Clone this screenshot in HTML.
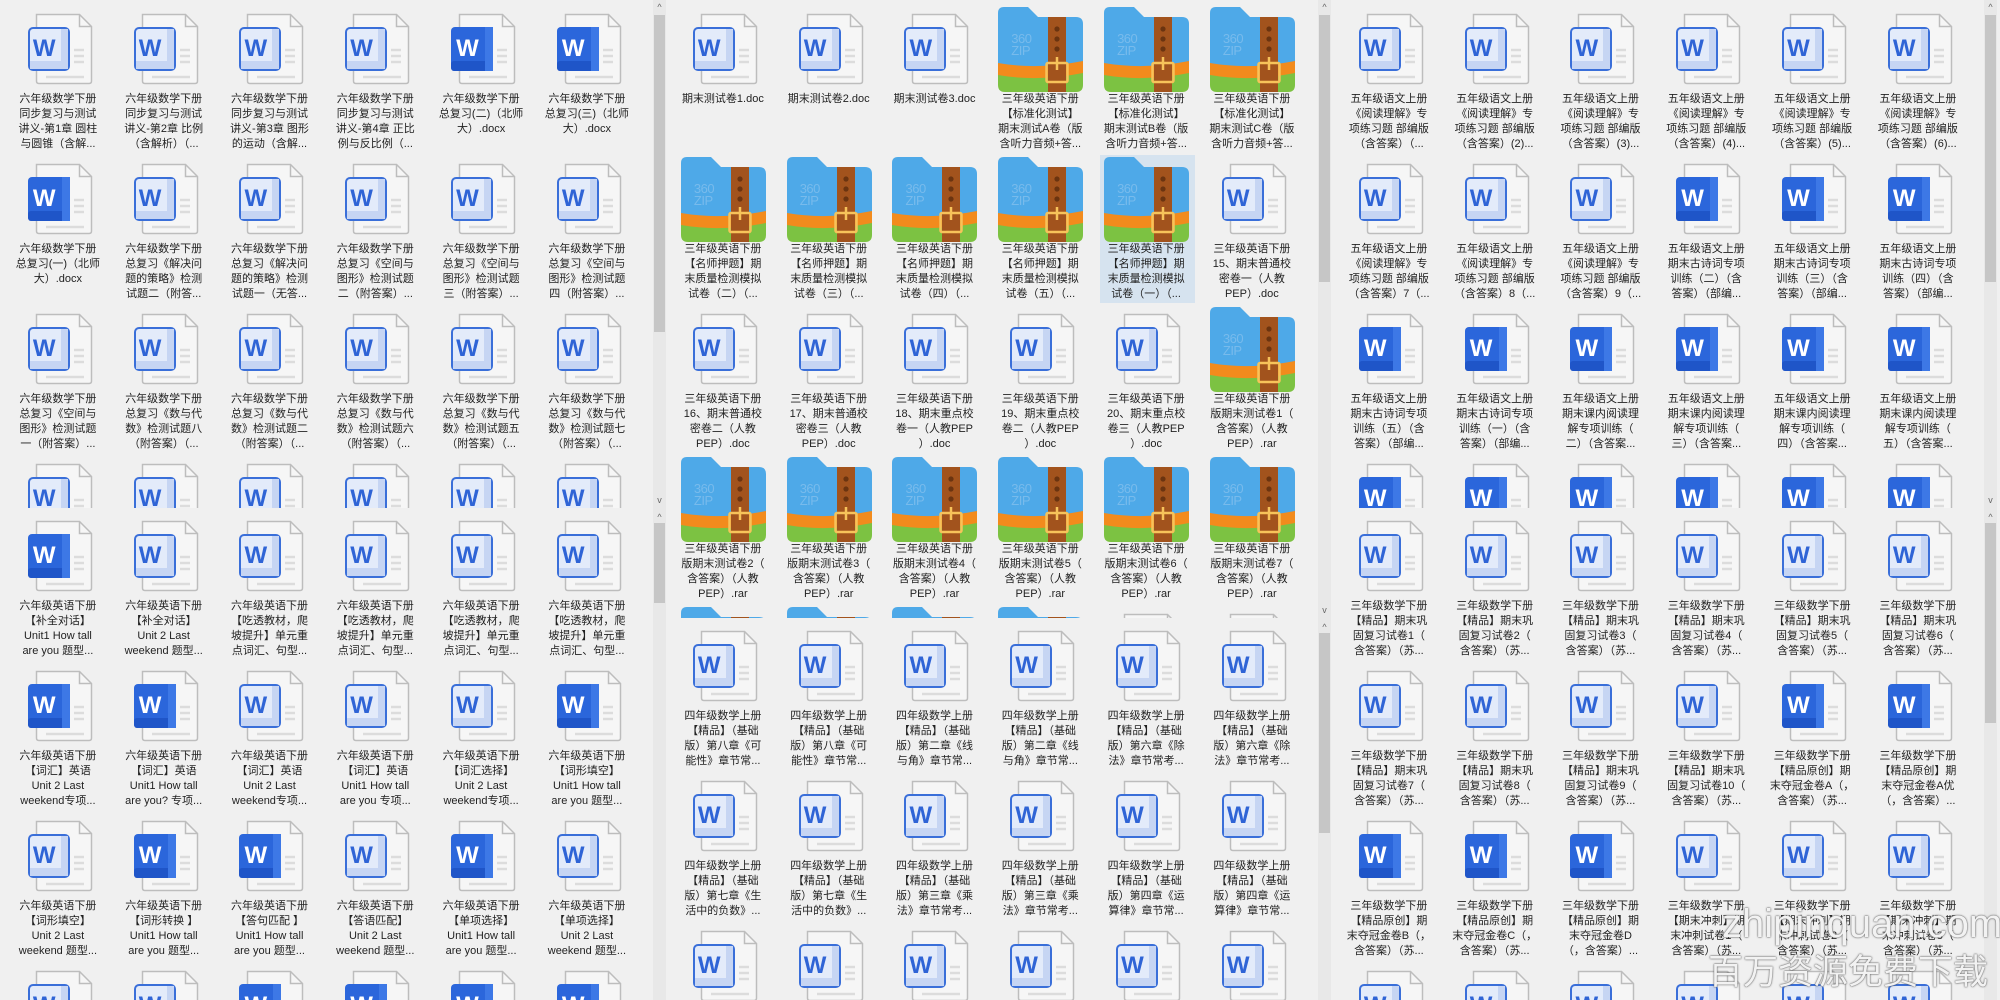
<!DOCTYPE html>
<html><head><meta charset="utf-8"><style>
html,body{margin:0;padding:0}
body{width:2000px;height:1000px;background:#f0f0f0;position:relative;overflow:hidden;font-family:"Liberation Sans","Noto Sans CJK SC",sans-serif}
.seg{position:absolute;overflow:hidden}
.g{position:absolute;left:0;display:grid;grid-template-columns:repeat(6,105.8px);grid-auto-rows:150px}
.it{position:relative}
.it svg{position:absolute}
.ic{left:calc(50% - 30px);top:0;width:66px;height:72px}
.zp{left:calc(50% - 42px);top:-6px;width:85px;height:85px}
.w{position:absolute;left:calc(50% - 25px);top:22px;font:bold 24px "Liberation Sans",sans-serif;color:#2f64d6}
.dk .w{color:#fff}
.zt{position:absolute;left:calc(50% - 29px);top:20px;font:13px/12px "Liberation Sans",sans-serif;color:#78bbec;letter-spacing:-0.5px}
.it p{position:absolute;top:79px;left:-6px;right:-6px;margin:0;text-align:center;font-size:11px;line-height:15px;color:#222;white-space:nowrap}
.sel{position:absolute;left:calc(50% - 46px);top:-8px;width:95px;height:148px;background:#d6e3ef}
.tr{position:absolute;width:13px;background:#e8e8e8}
.th{position:absolute;width:11px;background:#c6c6c6}
.ar{position:absolute;width:13px;font:9px/10px "Liberation Sans",sans-serif;color:#666;text-align:center}
.wm{position:absolute;color:rgba(255,255,255,0.92);text-shadow:0 0 2px #666,0 0 1px #444;white-space:nowrap}
</style></head><body>
<svg width="0" height="0" style="position:absolute">
<defs>
<symbol id="L" viewBox="0 0 66 72">
<path d="M8.5 1.5H51.5L63.5 13.5V68Q63.5 70.5 61 70.5H11Q8.5 70.5 8.5 68Z" fill="#f6f6f6" stroke="#bdbdbd" stroke-width="1.5"/>
<path d="M51.5 1.5V13.5H63.5" fill="none" stroke="#bdbdbd" stroke-width="1.5"/>
<path d="M46 37h10M46 43h10M46 49h10M18 64h38" stroke="#dcdcdc" stroke-width="2.5"/>
<rect x="1" y="15" width="40" height="42" rx="4" fill="#e3ebfa" stroke="#3a6fd9" stroke-width="2"/>
<rect x="33" y="16" width="7" height="40" fill="#c6d5f3"/>
<rect x="2" y="48" width="38" height="8" fill="#c6d5f3"/>
</symbol>
<symbol id="D" viewBox="0 0 66 72">
<path d="M8.5 1.5H51.5L63.5 13.5V68Q63.5 70.5 61 70.5H11Q8.5 70.5 8.5 68Z" fill="#f6f6f6" stroke="#bdbdbd" stroke-width="1.5"/>
<path d="M51.5 1.5V13.5H63.5" fill="none" stroke="#bdbdbd" stroke-width="1.5"/>
<path d="M46 37h10M46 43h10M46 49h10M18 64h38" stroke="#dcdcdc" stroke-width="2.5"/>
<rect x="0" y="14" width="42" height="44" rx="4" fill="#2b66db"/>
<rect x="0" y="48" width="42" height="10" rx="3" fill="#1f55c8"/>
<rect x="34" y="14" width="8" height="44" fill="#3d78e6"/>
</symbol>
<symbol id="Z" viewBox="0 0 85 85">
<path d="M6 0H30L40 10H78Q85 10 85 17V62H0V6Q0 0 6 0Z" fill="#4ea9e8"/>
<path d="M0 56Q40 63 85 54V72H0Z" fill="#f28b1d"/>
<path d="M0 68Q40 75 85 66V78Q85 85 78 85H7Q0 85 0 78Z" fill="#7cc242"/>
<rect x="50" y="10" width="18" height="75" fill="#a2531d"/>
<circle cx="59" cy="22" r="2.6" fill="#6b3410"/><circle cx="59" cy="32" r="2.6" fill="#6b3410"/><circle cx="59" cy="42" r="2.6" fill="#6b3410"/>
<rect x="48.5" y="56" width="21" height="19" rx="1.5" fill="none" stroke="#f7c35a" stroke-width="2.5"/>
<path d="M59 50V63" stroke="#f7c35a" stroke-width="2.5"/>
</symbol>
</defs></svg>

<!-- PANEL 1 -->
<div class="seg" style="left:5px;top:0;width:640px;height:508px">
<div class="g" style="top:13px">
<div class="it"><svg class="ic"><use href="#L"/></svg><b class="w">W</b><p>六年级数学下册<br>同步复习与测试<br>讲义-第1章 圆柱<br>与圆锥（含解...</p></div>
<div class="it"><svg class="ic"><use href="#L"/></svg><b class="w">W</b><p>六年级数学下册<br>同步复习与测试<br>讲义-第2章 比例<br>（含解析）（...</p></div>
<div class="it"><svg class="ic"><use href="#L"/></svg><b class="w">W</b><p>六年级数学下册<br>同步复习与测试<br>讲义-第3章 图形<br>的运动（含解...</p></div>
<div class="it"><svg class="ic"><use href="#L"/></svg><b class="w">W</b><p>六年级数学下册<br>同步复习与测试<br>讲义-第4章 正比<br>例与反比例（...</p></div>
<div class="it dk"><svg class="ic"><use href="#D"/></svg><b class="w">W</b><p>六年级数学下册<br>总复习(二)（北师<br>大）.docx</p></div>
<div class="it dk"><svg class="ic"><use href="#D"/></svg><b class="w">W</b><p>六年级数学下册<br>总复习(三)（北师<br>大）.docx</p></div>
<div class="it dk"><svg class="ic"><use href="#D"/></svg><b class="w">W</b><p>六年级数学下册<br>总复习(一)（北师<br>大）.docx</p></div>
<div class="it"><svg class="ic"><use href="#L"/></svg><b class="w">W</b><p>六年级数学下册<br>总复习《解决问<br>题的策略》检测<br>试题二（附答...</p></div>
<div class="it"><svg class="ic"><use href="#L"/></svg><b class="w">W</b><p>六年级数学下册<br>总复习《解决问<br>题的策略》检测<br>试题一（无答...</p></div>
<div class="it"><svg class="ic"><use href="#L"/></svg><b class="w">W</b><p>六年级数学下册<br>总复习《空间与<br>图形》检测试题<br>二（附答案）...</p></div>
<div class="it"><svg class="ic"><use href="#L"/></svg><b class="w">W</b><p>六年级数学下册<br>总复习《空间与<br>图形》检测试题<br>三（附答案）...</p></div>
<div class="it"><svg class="ic"><use href="#L"/></svg><b class="w">W</b><p>六年级数学下册<br>总复习《空间与<br>图形》检测试题<br>四（附答案）...</p></div>
<div class="it"><svg class="ic"><use href="#L"/></svg><b class="w">W</b><p>六年级数学下册<br>总复习《空间与<br>图形》检测试题<br>一（附答案）...</p></div>
<div class="it"><svg class="ic"><use href="#L"/></svg><b class="w">W</b><p>六年级数学下册<br>总复习《数与代<br>数》检测试题八<br>（附答案）（...</p></div>
<div class="it"><svg class="ic"><use href="#L"/></svg><b class="w">W</b><p>六年级数学下册<br>总复习《数与代<br>数》检测试题二<br>（附答案）（...</p></div>
<div class="it"><svg class="ic"><use href="#L"/></svg><b class="w">W</b><p>六年级数学下册<br>总复习《数与代<br>数》检测试题六<br>（附答案）（...</p></div>
<div class="it"><svg class="ic"><use href="#L"/></svg><b class="w">W</b><p>六年级数学下册<br>总复习《数与代<br>数》检测试题五<br>（附答案）（...</p></div>
<div class="it"><svg class="ic"><use href="#L"/></svg><b class="w">W</b><p>六年级数学下册<br>总复习《数与代<br>数》检测试题七<br>（附答案）（...</p></div>
<div class="it"><svg class="ic"><use href="#L"/></svg><b class="w">W</b></div>
<div class="it"><svg class="ic"><use href="#L"/></svg><b class="w">W</b></div>
<div class="it"><svg class="ic"><use href="#L"/></svg><b class="w">W</b></div>
<div class="it"><svg class="ic"><use href="#L"/></svg><b class="w">W</b></div>
<div class="it"><svg class="ic"><use href="#L"/></svg><b class="w">W</b></div>
<div class="it"><svg class="ic"><use href="#L"/></svg><b class="w">W</b></div>
</div></div>

<div class="seg" style="left:5px;top:508px;width:640px;height:492px">
<div class="g" style="top:12px">
<div class="it dk"><svg class="ic"><use href="#D"/></svg><b class="w">W</b><p>六年级英语下册<br>【补全对话】<br>Unit1 How tall<br>are you 题型...</p></div>
<div class="it"><svg class="ic"><use href="#L"/></svg><b class="w">W</b><p>六年级英语下册<br>【补全对话】<br>Unit 2 Last<br>weekend 题型...</p></div>
<div class="it"><svg class="ic"><use href="#L"/></svg><b class="w">W</b><p>六年级英语下册<br>【吃透教材，爬<br>坡提升】单元重<br>点词汇、句型...</p></div>
<div class="it"><svg class="ic"><use href="#L"/></svg><b class="w">W</b><p>六年级英语下册<br>【吃透教材，爬<br>坡提升】单元重<br>点词汇、句型...</p></div>
<div class="it"><svg class="ic"><use href="#L"/></svg><b class="w">W</b><p>六年级英语下册<br>【吃透教材，爬<br>坡提升】单元重<br>点词汇、句型...</p></div>
<div class="it"><svg class="ic"><use href="#L"/></svg><b class="w">W</b><p>六年级英语下册<br>【吃透教材，爬<br>坡提升】单元重<br>点词汇、句型...</p></div>
<div class="it dk"><svg class="ic"><use href="#D"/></svg><b class="w">W</b><p>六年级英语下册<br>【词汇】英语<br>Unit 2 Last<br>weekend专项...</p></div>
<div class="it dk"><svg class="ic"><use href="#D"/></svg><b class="w">W</b><p>六年级英语下册<br>【词汇】英语<br>Unit1 How tall<br>are you? 专项...</p></div>
<div class="it"><svg class="ic"><use href="#L"/></svg><b class="w">W</b><p>六年级英语下册<br>【词汇】英语<br>Unit 2 Last<br>weekend专项...</p></div>
<div class="it"><svg class="ic"><use href="#L"/></svg><b class="w">W</b><p>六年级英语下册<br>【词汇】英语<br>Unit1 How tall<br>are you 专项...</p></div>
<div class="it"><svg class="ic"><use href="#L"/></svg><b class="w">W</b><p>六年级英语下册<br>【词汇选择】<br>Unit 2 Last<br>weekend专项...</p></div>
<div class="it dk"><svg class="ic"><use href="#D"/></svg><b class="w">W</b><p>六年级英语下册<br>【词形填空】<br>Unit1 How tall<br>are you 题型...</p></div>
<div class="it"><svg class="ic"><use href="#L"/></svg><b class="w">W</b><p>六年级英语下册<br>【词形填空】<br>Unit 2 Last<br>weekend 题型...</p></div>
<div class="it dk"><svg class="ic"><use href="#D"/></svg><b class="w">W</b><p>六年级英语下册<br>【词形转换 】<br>Unit1 How tall<br>are you 题型...</p></div>
<div class="it dk"><svg class="ic"><use href="#D"/></svg><b class="w">W</b><p>六年级英语下册<br>【答句匹配 】<br>Unit1 How tall<br>are you 题型...</p></div>
<div class="it"><svg class="ic"><use href="#L"/></svg><b class="w">W</b><p>六年级英语下册<br>【答语匹配】<br>Unit 2 Last<br>weekend 题型...</p></div>
<div class="it dk"><svg class="ic"><use href="#D"/></svg><b class="w">W</b><p>六年级英语下册<br>【单项选择】<br>Unit1 How tall<br>are you 题型...</p></div>
<div class="it"><svg class="ic"><use href="#L"/></svg><b class="w">W</b><p>六年级英语下册<br>【单项选择】<br>Unit 2 Last<br>weekend 题型...</p></div>
<div class="it"><svg class="ic"><use href="#L"/></svg><b class="w">W</b></div>
<div class="it"><svg class="ic"><use href="#L"/></svg><b class="w">W</b></div>
<div class="it dk"><svg class="ic"><use href="#D"/></svg><b class="w">W</b></div>
<div class="it dk"><svg class="ic"><use href="#D"/></svg><b class="w">W</b></div>
<div class="it dk"><svg class="ic"><use href="#D"/></svg><b class="w">W</b></div>
<div class="it dk"><svg class="ic"><use href="#D"/></svg><b class="w">W</b></div>
</div></div>

<!-- PANEL 2 -->
<div class="seg" style="left:670px;top:0;width:645px;height:618px">
<div class="g" style="top:13px">
<div class="it"><svg class="ic"><use href="#L"/></svg><b class="w">W</b><p>期末测试卷1.doc</p></div>
<div class="it"><svg class="ic"><use href="#L"/></svg><b class="w">W</b><p>期末测试卷2.doc</p></div>
<div class="it"><svg class="ic"><use href="#L"/></svg><b class="w">W</b><p>期末测试卷3.doc</p></div>
<div class="it"><svg class="zp"><use href="#Z"/></svg><span class="zt">360<br>ZIP</span><p>三年级英语下册<br>【标准化测试】<br>期末测试A卷（版<br>含听力音频+答...</p></div>
<div class="it"><svg class="zp"><use href="#Z"/></svg><span class="zt">360<br>ZIP</span><p>三年级英语下册<br>【标准化测试】<br>期末测试B卷（版<br>含听力音频+答...</p></div>
<div class="it"><svg class="zp"><use href="#Z"/></svg><span class="zt">360<br>ZIP</span><p>三年级英语下册<br>【标准化测试】<br>期末测试C卷（版<br>含听力音频+答...</p></div>
<div class="it"><svg class="zp"><use href="#Z"/></svg><span class="zt">360<br>ZIP</span><p>三年级英语下册<br>【名师押题】期<br>末质量检测模拟<br>试卷（二）（...</p></div>
<div class="it"><svg class="zp"><use href="#Z"/></svg><span class="zt">360<br>ZIP</span><p>三年级英语下册<br>【名师押题】期<br>末质量检测模拟<br>试卷（三）（...</p></div>
<div class="it"><svg class="zp"><use href="#Z"/></svg><span class="zt">360<br>ZIP</span><p>三年级英语下册<br>【名师押题】期<br>末质量检测模拟<br>试卷（四）（...</p></div>
<div class="it"><svg class="zp"><use href="#Z"/></svg><span class="zt">360<br>ZIP</span><p>三年级英语下册<br>【名师押题】期<br>末质量检测模拟<br>试卷（五）（...</p></div>
<div class="it"><div class="sel"></div><svg class="zp"><use href="#Z"/></svg><span class="zt">360<br>ZIP</span><p>三年级英语下册<br>【名师押题】期<br>末质量检测模拟<br>试卷（一）（...</p></div>
<div class="it"><svg class="ic"><use href="#L"/></svg><b class="w">W</b><p>三年级英语下册<br>15、期末普通校<br>密卷一（人教<br>PEP）.doc</p></div>
<div class="it"><svg class="ic"><use href="#L"/></svg><b class="w">W</b><p>三年级英语下册<br>16、期末普通校<br>密卷二（人教<br>PEP）.doc</p></div>
<div class="it"><svg class="ic"><use href="#L"/></svg><b class="w">W</b><p>三年级英语下册<br>17、期末普通校<br>密卷三（人教<br>PEP）.doc</p></div>
<div class="it"><svg class="ic"><use href="#L"/></svg><b class="w">W</b><p>三年级英语下册<br>18、期末重点校<br>卷一（人教PEP<br>）.doc</p></div>
<div class="it"><svg class="ic"><use href="#L"/></svg><b class="w">W</b><p>三年级英语下册<br>19、期末重点校<br>卷二（人教PEP<br>）.doc</p></div>
<div class="it"><svg class="ic"><use href="#L"/></svg><b class="w">W</b><p>三年级英语下册<br>20、期末重点校<br>卷三（人教PEP<br>）.doc</p></div>
<div class="it"><svg class="zp"><use href="#Z"/></svg><span class="zt">360<br>ZIP</span><p>三年级英语下册<br>版期末测试卷1（<br>含答案）（人教<br>PEP）.rar</p></div>
<div class="it"><svg class="zp"><use href="#Z"/></svg><span class="zt">360<br>ZIP</span><p>三年级英语下册<br>版期末测试卷2（<br>含答案）（人教<br>PEP）.rar</p></div>
<div class="it"><svg class="zp"><use href="#Z"/></svg><span class="zt">360<br>ZIP</span><p>三年级英语下册<br>版期末测试卷3（<br>含答案）（人教<br>PEP）.rar</p></div>
<div class="it"><svg class="zp"><use href="#Z"/></svg><span class="zt">360<br>ZIP</span><p>三年级英语下册<br>版期末测试卷4（<br>含答案）（人教<br>PEP）.rar</p></div>
<div class="it"><svg class="zp"><use href="#Z"/></svg><span class="zt">360<br>ZIP</span><p>三年级英语下册<br>版期末测试卷5（<br>含答案）（人教<br>PEP）.rar</p></div>
<div class="it"><svg class="zp"><use href="#Z"/></svg><span class="zt">360<br>ZIP</span><p>三年级英语下册<br>版期末测试卷6（<br>含答案）（人教<br>PEP）.rar</p></div>
<div class="it"><svg class="zp"><use href="#Z"/></svg><span class="zt">360<br>ZIP</span><p>三年级英语下册<br>版期末测试卷7（<br>含答案）（人教<br>PEP）.rar</p></div>
<div class="it"><svg class="zp"><use href="#Z"/></svg></div>
<div class="it"><svg class="zp"><use href="#Z"/></svg></div>
<div class="it"><svg class="zp"><use href="#Z"/></svg></div>
<div class="it"><svg class="zp"><use href="#Z"/></svg></div>
<div class="it"><svg class="ic"><use href="#L"/></svg></div>
<div class="it"><svg class="ic"><use href="#L"/></svg></div>
</div></div>

<div class="seg" style="left:670px;top:618px;width:645px;height:382px">
<div class="g" style="top:12px">
<div class="it"><svg class="ic"><use href="#L"/></svg><b class="w">W</b><p>四年级数学上册<br>【精品】（基础<br>版）第八章《可<br>能性》章节常...</p></div>
<div class="it"><svg class="ic"><use href="#L"/></svg><b class="w">W</b><p>四年级数学上册<br>【精品】（基础<br>版）第八章《可<br>能性》章节常...</p></div>
<div class="it"><svg class="ic"><use href="#L"/></svg><b class="w">W</b><p>四年级数学上册<br>【精品】（基础<br>版）第二章《线<br>与角》章节常...</p></div>
<div class="it"><svg class="ic"><use href="#L"/></svg><b class="w">W</b><p>四年级数学上册<br>【精品】（基础<br>版）第二章《线<br>与角》章节常...</p></div>
<div class="it"><svg class="ic"><use href="#L"/></svg><b class="w">W</b><p>四年级数学上册<br>【精品】（基础<br>版）第六章《除<br>法》章节常考...</p></div>
<div class="it"><svg class="ic"><use href="#L"/></svg><b class="w">W</b><p>四年级数学上册<br>【精品】（基础<br>版）第六章《除<br>法》章节常考...</p></div>
<div class="it"><svg class="ic"><use href="#L"/></svg><b class="w">W</b><p>四年级数学上册<br>【精品】（基础<br>版）第七章《生<br>活中的负数》...</p></div>
<div class="it"><svg class="ic"><use href="#L"/></svg><b class="w">W</b><p>四年级数学上册<br>【精品】（基础<br>版）第七章《生<br>活中的负数》...</p></div>
<div class="it"><svg class="ic"><use href="#L"/></svg><b class="w">W</b><p>四年级数学上册<br>【精品】（基础<br>版）第三章《乘<br>法》章节常考...</p></div>
<div class="it"><svg class="ic"><use href="#L"/></svg><b class="w">W</b><p>四年级数学上册<br>【精品】（基础<br>版）第三章《乘<br>法》章节常考...</p></div>
<div class="it"><svg class="ic"><use href="#L"/></svg><b class="w">W</b><p>四年级数学上册<br>【精品】（基础<br>版）第四章《运<br>算律》章节常...</p></div>
<div class="it"><svg class="ic"><use href="#L"/></svg><b class="w">W</b><p>四年级数学上册<br>【精品】（基础<br>版）第四章《运<br>算律》章节常...</p></div>
<div class="it"><svg class="ic"><use href="#L"/></svg><b class="w">W</b></div>
<div class="it"><svg class="ic"><use href="#L"/></svg><b class="w">W</b></div>
<div class="it"><svg class="ic"><use href="#L"/></svg><b class="w">W</b></div>
<div class="it"><svg class="ic"><use href="#L"/></svg><b class="w">W</b></div>
<div class="it"><svg class="ic"><use href="#L"/></svg><b class="w">W</b></div>
<div class="it"><svg class="ic"><use href="#L"/></svg><b class="w">W</b></div>
</div></div>

<!-- PANEL 3 -->
<div class="seg" style="left:1336px;top:0;width:645px;height:508px">
<div class="g" style="top:13px">
<div class="it"><svg class="ic"><use href="#L"/></svg><b class="w">W</b><p>五年级语文上册<br>《阅读理解》专<br>项练习题 部编版<br>（含答案）（...</p></div>
<div class="it"><svg class="ic"><use href="#L"/></svg><b class="w">W</b><p>五年级语文上册<br>《阅读理解》专<br>项练习题 部编版<br>（含答案）(2)...</p></div>
<div class="it"><svg class="ic"><use href="#L"/></svg><b class="w">W</b><p>五年级语文上册<br>《阅读理解》专<br>项练习题 部编版<br>（含答案）(3)...</p></div>
<div class="it"><svg class="ic"><use href="#L"/></svg><b class="w">W</b><p>五年级语文上册<br>《阅读理解》专<br>项练习题 部编版<br>（含答案）(4)...</p></div>
<div class="it"><svg class="ic"><use href="#L"/></svg><b class="w">W</b><p>五年级语文上册<br>《阅读理解》专<br>项练习题 部编版<br>（含答案）(5)...</p></div>
<div class="it"><svg class="ic"><use href="#L"/></svg><b class="w">W</b><p>五年级语文上册<br>《阅读理解》专<br>项练习题 部编版<br>（含答案）(6)...</p></div>
<div class="it"><svg class="ic"><use href="#L"/></svg><b class="w">W</b><p>五年级语文上册<br>《阅读理解》专<br>项练习题 部编版<br>（含答案）7（...</p></div>
<div class="it"><svg class="ic"><use href="#L"/></svg><b class="w">W</b><p>五年级语文上册<br>《阅读理解》专<br>项练习题 部编版<br>（含答案）8（...</p></div>
<div class="it"><svg class="ic"><use href="#L"/></svg><b class="w">W</b><p>五年级语文上册<br>《阅读理解》专<br>项练习题 部编版<br>（含答案）9（...</p></div>
<div class="it dk"><svg class="ic"><use href="#D"/></svg><b class="w">W</b><p>五年级语文上册<br>期末古诗词专项<br>训练（二）（含<br>答案）（部编...</p></div>
<div class="it dk"><svg class="ic"><use href="#D"/></svg><b class="w">W</b><p>五年级语文上册<br>期末古诗词专项<br>训练（三）（含<br>答案）（部编...</p></div>
<div class="it dk"><svg class="ic"><use href="#D"/></svg><b class="w">W</b><p>五年级语文上册<br>期末古诗词专项<br>训练（四）（含<br>答案）（部编...</p></div>
<div class="it dk"><svg class="ic"><use href="#D"/></svg><b class="w">W</b><p>五年级语文上册<br>期末古诗词专项<br>训练（五）（含<br>答案）（部编...</p></div>
<div class="it dk"><svg class="ic"><use href="#D"/></svg><b class="w">W</b><p>五年级语文上册<br>期末古诗词专项<br>训练（一）（含<br>答案）（部编...</p></div>
<div class="it dk"><svg class="ic"><use href="#D"/></svg><b class="w">W</b><p>五年级语文上册<br>期末课内阅读理<br>解专项训练（<br>二）（含答案...</p></div>
<div class="it dk"><svg class="ic"><use href="#D"/></svg><b class="w">W</b><p>五年级语文上册<br>期末课内阅读理<br>解专项训练（<br>三）（含答案...</p></div>
<div class="it dk"><svg class="ic"><use href="#D"/></svg><b class="w">W</b><p>五年级语文上册<br>期末课内阅读理<br>解专项训练（<br>四）（含答案...</p></div>
<div class="it dk"><svg class="ic"><use href="#D"/></svg><b class="w">W</b><p>五年级语文上册<br>期末课内阅读理<br>解专项训练（<br>五）（含答案...</p></div>
<div class="it dk"><svg class="ic"><use href="#D"/></svg><b class="w">W</b></div>
<div class="it dk"><svg class="ic"><use href="#D"/></svg><b class="w">W</b></div>
<div class="it dk"><svg class="ic"><use href="#D"/></svg><b class="w">W</b></div>
<div class="it dk"><svg class="ic"><use href="#D"/></svg><b class="w">W</b></div>
<div class="it dk"><svg class="ic"><use href="#D"/></svg><b class="w">W</b></div>
<div class="it dk"><svg class="ic"><use href="#D"/></svg><b class="w">W</b></div>
</div></div>

<div class="seg" style="left:1336px;top:508px;width:645px;height:492px">
<div class="g" style="top:12px">
<div class="it"><svg class="ic"><use href="#L"/></svg><b class="w">W</b><p>三年级数学下册<br>【精品】期末巩<br>固复习试卷1（<br>含答案）（苏...</p></div>
<div class="it"><svg class="ic"><use href="#L"/></svg><b class="w">W</b><p>三年级数学下册<br>【精品】期末巩<br>固复习试卷2（<br>含答案）（苏...</p></div>
<div class="it"><svg class="ic"><use href="#L"/></svg><b class="w">W</b><p>三年级数学下册<br>【精品】期末巩<br>固复习试卷3（<br>含答案）（苏...</p></div>
<div class="it"><svg class="ic"><use href="#L"/></svg><b class="w">W</b><p>三年级数学下册<br>【精品】期末巩<br>固复习试卷4（<br>含答案）（苏...</p></div>
<div class="it"><svg class="ic"><use href="#L"/></svg><b class="w">W</b><p>三年级数学下册<br>【精品】期末巩<br>固复习试卷5（<br>含答案）（苏...</p></div>
<div class="it"><svg class="ic"><use href="#L"/></svg><b class="w">W</b><p>三年级数学下册<br>【精品】期末巩<br>固复习试卷6（<br>含答案）（苏...</p></div>
<div class="it"><svg class="ic"><use href="#L"/></svg><b class="w">W</b><p>三年级数学下册<br>【精品】期末巩<br>固复习试卷7（<br>含答案）（苏...</p></div>
<div class="it"><svg class="ic"><use href="#L"/></svg><b class="w">W</b><p>三年级数学下册<br>【精品】期末巩<br>固复习试卷8（<br>含答案）（苏...</p></div>
<div class="it"><svg class="ic"><use href="#L"/></svg><b class="w">W</b><p>三年级数学下册<br>【精品】期末巩<br>固复习试卷9（<br>含答案）（苏...</p></div>
<div class="it"><svg class="ic"><use href="#L"/></svg><b class="w">W</b><p>三年级数学下册<br>【精品】期末巩<br>固复习试卷10（<br>含答案）（苏...</p></div>
<div class="it dk"><svg class="ic"><use href="#D"/></svg><b class="w">W</b><p>三年级数学下册<br>【精品原创】期<br>末夺冠金卷A（，<br>含答案）（苏...</p></div>
<div class="it dk"><svg class="ic"><use href="#D"/></svg><b class="w">W</b><p>三年级数学下册<br>【精品原创】期<br>末夺冠金卷A优<br>（，含答案）...</p></div>
<div class="it dk"><svg class="ic"><use href="#D"/></svg><b class="w">W</b><p>三年级数学下册<br>【精品原创】期<br>末夺冠金卷B（，<br>含答案）（苏...</p></div>
<div class="it dk"><svg class="ic"><use href="#D"/></svg><b class="w">W</b><p>三年级数学下册<br>【精品原创】期<br>末夺冠金卷C（，<br>含答案）（苏...</p></div>
<div class="it dk"><svg class="ic"><use href="#D"/></svg><b class="w">W</b><p>三年级数学下册<br>【精品原创】期<br>末夺冠金卷D<br>（，含答案）...</p></div>
<div class="it"><svg class="ic"><use href="#L"/></svg><b class="w">W</b><p>三年级数学下册<br>【期末冲刺】期<br>末冲刺试卷1（<br>含答案）（苏...</p></div>
<div class="it"><svg class="ic"><use href="#L"/></svg><b class="w">W</b><p>三年级数学下册<br>【期末冲刺】期<br>末冲刺试卷2（<br>含答案）（苏...</p></div>
<div class="it"><svg class="ic"><use href="#L"/></svg><b class="w">W</b><p>三年级数学下册<br>【期末冲刺】期<br>末冲刺试卷3（<br>含答案）（苏...</p></div>
<div class="it"><svg class="ic"><use href="#L"/></svg><b class="w">W</b></div>
<div class="it"><svg class="ic"><use href="#L"/></svg><b class="w">W</b></div>
<div class="it"><svg class="ic"><use href="#L"/></svg><b class="w">W</b></div>
<div class="it"><svg class="ic"><use href="#L"/></svg><b class="w">W</b></div>
<div class="it"><svg class="ic"><use href="#L"/></svg><b class="w">W</b></div>
<div class="it"><svg class="ic"><use href="#L"/></svg><b class="w">W</b></div>
</div></div>

<!-- scrollbars -->
<div class="tr" style="left:653px;top:0;height:1000px"></div>
<div class="ar" style="left:653px;top:2px">^</div>
<div class="th" style="left:654px;top:15px;height:317px"></div>
<div class="ar" style="left:653px;top:495px">v</div>
<div class="ar" style="left:653px;top:512px">^</div>
<div class="th" style="left:654px;top:523px;height:80px"></div>

<div class="tr" style="left:1318px;top:0;height:1000px"></div>
<div class="ar" style="left:1318px;top:2px">^</div>
<div class="th" style="left:1319px;top:15px;height:267px"></div>
<div class="ar" style="left:1318px;top:605px">v</div>
<div class="ar" style="left:1318px;top:622px">^</div>
<div class="th" style="left:1319px;top:633px;height:200px"></div>

<div class="tr" style="left:1984px;top:0;height:1000px"></div>
<div class="ar" style="left:1984px;top:2px">^</div>
<div class="th" style="left:1985px;top:15px;height:267px"></div>
<div class="ar" style="left:1984px;top:495px">v</div>
<div class="ar" style="left:1984px;top:512px">^</div>
<div class="th" style="left:1985px;top:523px;height:200px"></div>

<div class="wm" style="left:1722px;top:900px;font-size:40px;line-height:48px;font-family:'Liberation Sans',sans-serif">zhipinquan.com</div>
<div class="wm" style="left:1708px;top:952px;font-size:35px;line-height:42px;font-family:'Liberation Sans','Noto Sans CJK SC',sans-serif">百万资源免费下载</div>
</body></html>
